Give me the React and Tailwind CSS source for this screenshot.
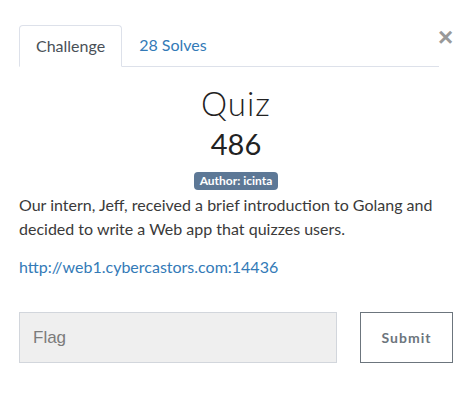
export default function App() {
    return (
        <div className="relative w-[472px] h-[403px] bg-white font-['Lato',sans-serif] text-[#333]">
            <button className="absolute left-[438px] top-[24px] text-[26px] leading-none font-bold text-[#999] font-['Liberation_Sans',sans-serif]">
                ×
            </button>
            <div className="px-[19px] pt-[25px]">
                <div className="flex w-[420px] border-b border-[#dde1ea]">
                    <div className="-mb-px px-[16px] py-[10px] leading-[20px] text-[16px] border border-[#dde1ea] border-b-white rounded-t-[4px] bg-white text-[#495057]">
                        Challenge
                    </div>
                    <div className="px-[17px] py-[10px] leading-[20px] text-[16px] text-[#337ab7]">
                        28 Solves
                    </div>
                </div>
                <div className="flex flex-col items-center pt-[16px]">
                    <h3 className="text-[33px] leading-[40px] font-light tracking-[1px] text-[#222]">Quiz</h3>
                    <div className="text-[29px] leading-[38px] text-[#222] mt-[2px]">486</div>
                    <span className="mt-[9px] px-[6px] rounded-[4px] bg-[#5d7896] text-white text-[12px] leading-[18px] font-bold">
                        Author: icinta
                    </span>
                </div>
                <p className="text-[16px] leading-[24px] mt-[3px] text-[#3a3a3a]">
                    Our intern, Jeff, received a brief introduction to Golang and decided to write a Web app that quizzes users.
                </p>
                <a className="block mt-[14px] text-[16px] leading-[24px] text-[#337ab7]">
                    http://web1.cybercastors.com:14436
                </a>
                <div className="flex items-center mt-[33px] gap-[23px]">
                    <input
                        placeholder="Flag"
                        className="w-[318px] h-[51px] bg-[#efefef] border border-[#d2d6dc] px-[13px] text-[17px] font-['Liberation_Sans',sans-serif] placeholder:text-[#7b7b7b] outline-none"
                    />
                    <button className="w-[93px] h-[51px] border border-[#6c757d] text-[#6c757d] text-[14px] font-bold tracking-[1px]">
                        Submit
                    </button>
                </div>
            </div>
        </div>
    );
}
